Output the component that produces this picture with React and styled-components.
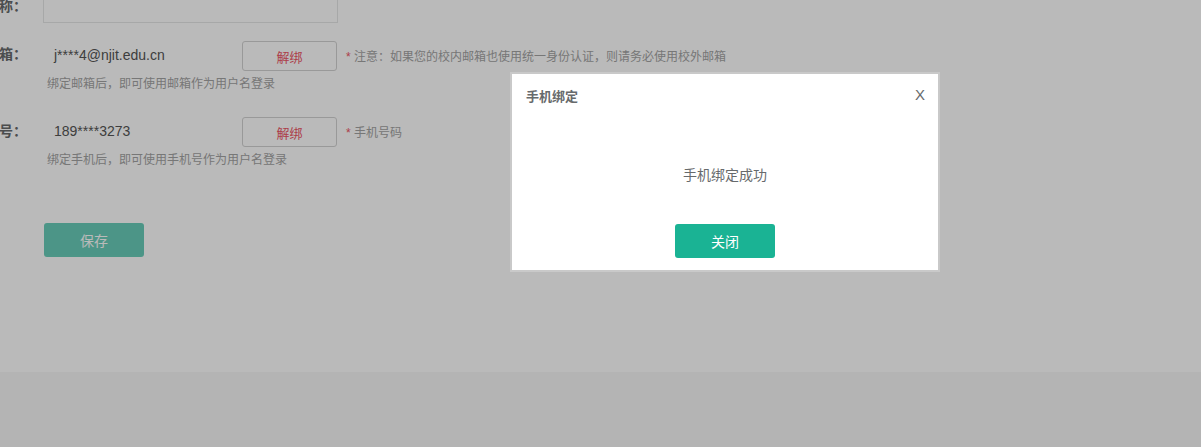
import React from 'react';
import styled, { createGlobalStyle } from 'styled-components';

const GlobalStyle = createGlobalStyle`
  html, body {
    margin: 0;
    padding: 0;
    background: #f7f7f7;
    font-family: "Liberation Sans", "Noto Sans CJK SC", sans-serif;
    overflow: hidden;
  }
`;

const Panel = styled.div`
  background: #fff;
  height: 372px;
  overflow: hidden;
`;

const Form = styled.div`
  margin-top: -11px;
  margin-left: -73px;
  display: flex;
  flex-direction: column;
`;

const Group = styled.div`
  display: flex;
  margin-bottom: ${(p) => p.$gap}px;
`;

const Label = styled.label`
  width: 100px;
  flex: none;
  text-align: right;
  font-size: 14px;
  font-weight: bold;
  color: #676a6c;
  line-height: ${(p) => p.$h}px;
  margin-top: ${(p) => p.$shift || 0}px;
  margin-right: 16px;
`;

const Field = styled.div`
  display: flex;
  flex-direction: column;
`;

const Line = styled.div`
  display: flex;
  align-items: center;
  height: 30px;
`;

const TextInput = styled.div`
  width: 295px;
  height: 34px;
  box-sizing: border-box;
  border: 1px solid #e5e6e7;
  background: #fff;
`;

const Value = styled.div`
  width: 199px;
  box-sizing: border-box;
  padding-left: 11px;
  margin-top: -2px;
  font-size: 14px;
  color: #555;
`;

const UnbindButton = styled.button`
  width: 95px;
  height: 30px;
  box-sizing: border-box;
  border: 1px solid #d2d2d2;
  border-radius: 3px;
  background: #fff;
  color: #ed5565;
  font-family: inherit;
  font-size: 13px;
  padding: 0;
`;

const Note = styled.span`
  margin-left: 9px;
  margin-top: -2px;
  font-size: 12px;
  color: #a3a3a3;

  &::before {
    content: "* ";
    color: #ed5565;
  }
`;

const Help = styled.div`
  margin-top: 4px;
  margin-left: 4px;
  font-size: 12px;
  line-height: 18px;
  color: #a3a3a3;
`;

const Actions = styled.div`
  padding-left: 117px;
`;

const SaveButton = styled.button`
  width: 100px;
  height: 34px;
  border: none;
  border-radius: 3px;
  background: #1ab394;
  color: #fff;
  font-family: inherit;
  font-size: 14px;
  opacity: 0.65;
  padding: 0;
`;

const Backdrop = styled.div`
  position: fixed;
  inset: 0;
  background: rgba(0, 0, 0, 0.27);
`;

const Modal = styled.div`
  position: fixed;
  top: 72px;
  left: 510px;
  width: 430px;
  height: 200px;
  box-sizing: border-box;
  border: 2px solid #c9c9c9;
  background: #fff;
  display: flex;
  flex-direction: column;
  color: #676a6c;
`;

const ModalHeader = styled.div`
  display: flex;
  justify-content: space-between;
  align-items: center;
  padding: 12px 13px 0 14px;
  height: 18px;
`;

const ModalTitle = styled.h4`
  margin: 0;
  font-size: 13px;
  font-weight: bold;
  color: #676a6c;
`;

const CloseX = styled.span`
  font-size: 15px;
  color: #676a6c;
  margin-top: -2px;
`;

const ModalBody = styled.div`
  flex: 1;
  display: flex;
  align-items: center;
  justify-content: center;
  padding-top: 20px;
  font-size: 14px;
`;

const ModalFooter = styled.div`
  display: flex;
  justify-content: center;
  padding-bottom: 12px;
`;

const PrimaryButton = styled.button`
  width: 100px;
  height: 34px;
  border: none;
  border-radius: 3px;
  background: #1ab394;
  color: #fff;
  font-family: inherit;
  font-size: 14px;
  padding: 0;
`;

export default function App() {
  return (
    <>
      <GlobalStyle />
      <Panel>
        <Form>
          <Group $gap={18}>
            <Label $h={34}>昵称：</Label>
            <TextInput />
          </Group>
          <Group $gap={24}>
            <Label $h={30} $shift={-2}>邮箱：</Label>
            <Field>
              <Line>
                <Value>j****4@njit.edu.cn</Value>
                <UnbindButton>解绑</UnbindButton>
                <Note>注意：如果您的校内邮箱也使用统一身份认证，则请务必使用校外邮箱</Note>
              </Line>
              <Help>绑定邮箱后，即可使用邮箱作为用户名登录</Help>
            </Field>
          </Group>
          <Group $gap={54}>
            <Label $h={30} $shift={-1}>手机号：</Label>
            <Field>
              <Line>
                <Value>189****3273</Value>
                <UnbindButton>解绑</UnbindButton>
                <Note>手机号码</Note>
              </Line>
              <Help>绑定手机后，即可使用手机号作为用户名登录</Help>
            </Field>
          </Group>
          <Actions>
            <SaveButton>保存</SaveButton>
          </Actions>
        </Form>
      </Panel>
      <Backdrop />
      <Modal>
        <ModalHeader>
          <ModalTitle>手机绑定</ModalTitle>
          <CloseX>X</CloseX>
        </ModalHeader>
        <ModalBody>手机绑定成功</ModalBody>
        <ModalFooter>
          <PrimaryButton>关闭</PrimaryButton>
        </ModalFooter>
      </Modal>
    </>
  );
}
